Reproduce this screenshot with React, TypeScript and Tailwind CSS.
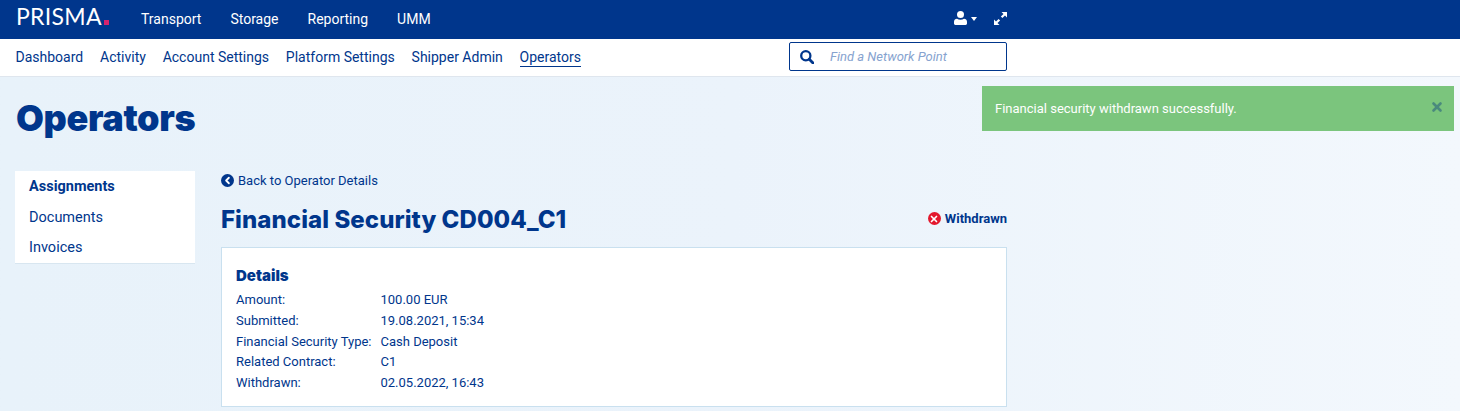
import { ChevronLeft, X } from "lucide-react";

const topLinks = ["Transport", "Storage", "Reporting", "UMM"];
const subLinks = ["Dashboard", "Activity", "Account Settings", "Platform Settings", "Shipper Admin", "Operators"];
const details = [
  ["Amount:", "100.00 EUR"],
  ["Submitted:", "19.08.2021, 15:34"],
  ["Financial Security Type:", "Cash Deposit"],
  ["Related Contract:", "C1"],
  ["Withdrawn:", "02.05.2022, 16:43"],
];

function UserIcon() {
  return (
    <svg viewBox="0 0 13 14" className="h-[14px] w-[13px] fill-white">
      <circle cx="6.500" cy="3.500" r="3.500" />
      <path d="M3 7.800c1 .6 2.200.9 3.500.9s2.500-.3 3.500-.9c1.700 0 3 1.300 3 3v1.800c0 .8-.6 1.400-1.400 1.400H1.400C.6 14 0 13.400 0 12.600v-1.800c0-1.700 1.300-3 3-3z" />
    </svg>
  );
}

function ExpandIcon() {
  return (
    <svg viewBox="0 0 13 13" className="h-[13px] w-[13px] fill-white">
      <path d="M7.500 0H13v5.500l-2-2-2.600 2.600-1.500-1.500L9.500 2z" />
      <path d="M0 13V7.500l2 2 2.600-2.600 1.500 1.500L3.500 11l2 2z" />
    </svg>
  );
}

function SearchIcon() {
  return (
    <svg viewBox="0 0 14 14" className="h-[14px] w-[14px] fill-none stroke-[#00368c]">
      <circle cx="5.800" cy="5.800" r="4.600" strokeWidth="2.300" />
      <path d="M9.300 9.300l3.700 3.700" strokeWidth="2.800" strokeLinecap="round" />
    </svg>
  );
}

export default function App() {
  return (
    <div className="relative h-[411px] w-[1460px] overflow-hidden bg-gradient-to-r from-[#e8f2fa] via-[#ebf3fb] to-[#f3f8fd] font-['Roboto',sans-serif] text-[14px] text-[#00368c]">
      <header className="flex h-[39px] items-center bg-[#00368c] pl-4 pr-[453px] text-white">
        <div className="mb-[6px] flex w-[125px] items-baseline font-['Lato',sans-serif] text-[23px] leading-none tracking-[0.3px]">
          PRISMA
          <span className="ml-[2px] h-[5px] w-[5px] bg-[#d6246e]" />
        </div>
        <nav className="flex gap-[29px]">
          {topLinks.map((link) => (
            <a key={link} className="text-[14px]">
              {link}
            </a>
          ))}
        </nav>
        <div className="ml-auto flex items-center">
          <span className="mb-[4px]">
            <UserIcon />
          </span>
          <span className="mb-[2px] ml-[4px] h-0 w-0 border-x-[3.500px] border-t-[4px] border-x-transparent border-t-white" />
          <span className="mb-[3px] ml-[17px]">
            <ExpandIcon />
          </span>
        </div>
      </header>

      <div className="flex h-[38px] items-center border-b border-[#dfe6ee] bg-white pl-[15.500px] pr-[453px]">
        <nav className="flex gap-[16.800px]">
          {subLinks.map((link) => (
            <a
              key={link}
              className={link === "Operators" ? "border-b border-[#00368c] leading-[17px]" : "leading-[17px]"}
            >
              {link}
            </a>
          ))}
        </nav>
        <div className="mb-[2px] ml-auto flex h-[29px] w-[218px] items-center rounded-[2px] border border-[#00368c] pl-[10px]">
          <SearchIcon />
          <span className="ml-4 text-[13px] italic text-[#86a3cf]">Find a Network Point</span>
        </div>
      </div>

      <main className="pl-4">
        <h1 className="pt-[19px] font-['Inter',sans-serif] text-[36px] font-black leading-[44px] tracking-[-0.35px]">Operators</h1>
        <div className="mt-[31px] flex gap-[26px]">
          <aside className="-ml-px flex h-[93px] w-[180px] flex-col border-b border-[#d8e6f0] bg-white pl-[14px] pt-[7px] text-[14.500px]">
            <a className="h-[31px] font-bold leading-[18px]">Assignments</a>
            <a className="h-[30px] leading-[18px]">Documents</a>
            <a className="leading-[18px]">Invoices</a>
          </aside>
          <section className="w-[786px]">
            <a className="mt-px flex items-center text-[13px] leading-[18px]">
              <span className="-mt-px flex h-[13px] w-[13px] items-center justify-center rounded-full bg-[#00368c]">
                <ChevronLeft className="h-[11px] w-[11px] text-white" strokeWidth={4} />
              </span>
              <span className="ml-[4px]">Back to Operator Details</span>
            </a>
            <div className="mt-[12px] flex h-[35px] items-center justify-between">
              <h2 className="font-['Inter',sans-serif] text-[24px] font-extrabold tracking-[0.07px]">Financial Security CD004_C1</h2>
              <span className="mb-[2px] flex items-center text-[13px] font-bold">
                <span className="mr-[4px] flex h-[13px] w-[13px] items-center justify-center rounded-full bg-[#e3182d]">
                  <X className="h-[10px] w-[10px] text-white" strokeWidth={4} />
                </span>
                Withdrawn
              </span>
            </div>
            <div className="mt-[10px] h-[160px] border border-[#c9e0ef] bg-white pl-[14px] pt-[18px] text-[13px] leading-[20.800px]">
              <h3 className="mb-[4px] font-['Inter',sans-serif] text-[15px] font-black leading-[20px]">Details</h3>
              {details.map(([label, value]) => (
                <div key={label} className="flex">
                  <span className="w-[144.500px]">{label}</span>
                  <span>{value}</span>
                </div>
              ))}
            </div>
          </section>
        </div>
      </main>

      <div className="absolute left-[982px] top-[86px] flex h-[45px] w-[472px] items-center justify-between bg-[#7bc57d] pl-[13px] pr-[10px] text-[13px] text-white">
        Financial security withdrawn successfully.
        <X className="mb-[3px] h-[14px] w-[14px] text-[#4a8a7d]" strokeWidth={4.500} />
      </div>
    </div>
  );
}
